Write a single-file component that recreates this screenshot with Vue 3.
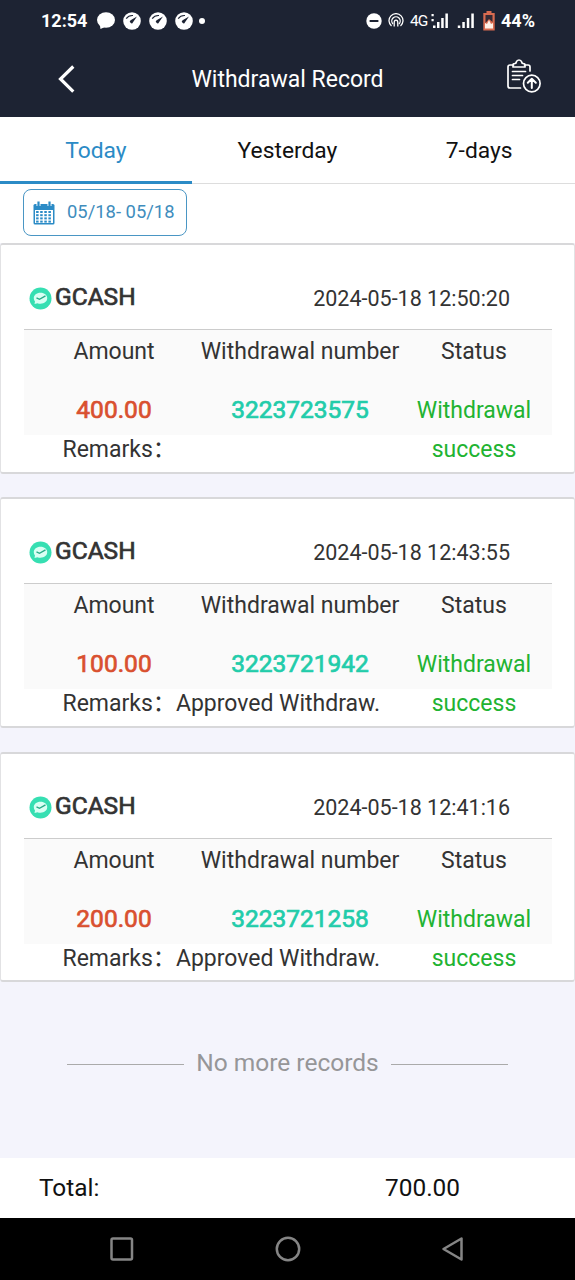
<script setup>
const tabs = ['Today', 'Yesterday', '7-days']
const records = [
  { time: '2024-05-18 12:50:20', amount: '400.00', number: '3223723575', remark: '' },
  { time: '2024-05-18 12:43:55', amount: '100.00', number: '3223721942', remark: 'Approved Withdraw.' },
  { time: '2024-05-18 12:41:16', amount: '200.00', number: '3223721258', remark: 'Approved Withdraw.' },
]
const gridCells = [0, 1, 2, 3].flatMap((r) => [0, 1, 2, 3].map((c) => ({ x: 3.6 + c * 4.1, y: 10 + r * 3.2 })))
</script>

<template>
  <div class="screen">
    <header class="top">
      <div class="statusbar">
        <span class="clock">12:54</span>
        <svg class="chat" width="20" height="18" viewBox="0 0 20 18"><ellipse cx="10" cy="8" rx="9" ry="7.7" fill="#fff" /><path d="M3.500 11L4.500 17L11 14Z" fill="#fff" /></svg>
        <svg v-for="n in 3" :key="n" class="gauge" width="18" height="18" viewBox="0 0 18 18">
          <circle cx="9" cy="9" r="8.8" fill="#fff" />
          <path d="M3.2 6.6Q5.600 3.200 10 3.500" fill="none" stroke="#1d2333" stroke-width="1.200" />
          <path d="M14 4.600L10 10.200A1.600 1.600 0 1 1 7.600 8.300Z" fill="#1d2333" />
        </svg>
        <i class="dot"></i>
        <span class="spacer"></span>
        <svg width="16" height="16" viewBox="0 0 16 16"><circle cx="8" cy="8" r="7.700" fill="#fff" /><path d="M3.600 8H12.400" stroke="#1d2333" stroke-width="2" /></svg>
        <svg class="cast" width="16" height="15" viewBox="0 0 16 15" fill="none" stroke="#fff" stroke-width="1.300">
          <path d="M3.500 13A7 7 0 1 1 12.500 13" /><path d="M5 11A4.200 4.200 0 1 1 11 11" /><path d="M6.200 13.500V9.500Q6.200 7.200 8 7.200T9.800 9.500V13.500" />
        </svg>
        <span class="net">4G</span>
        <svg class="sig" width="18" height="16" viewBox="0 0 18 16" fill="#fff"><path d="M.5 1h2.200v2.200h-2.200zM.5 6h2.200v2.200h-2.200zM2 12.500h2.500v2.500h-2.500zM6 9h2.500v6h-2.500zM10.200 5h2.500v10h-2.500zM14.400 .5h2.500v14.500h-2.500z" /></svg>
        <svg class="sig2" width="18" height="16" viewBox="0 0 18 16" fill="#fff"><path d="M.8 12.500h2.500v2.500h-2.500zM5.300 9h2.500v6h-2.500zM9.800 5h2.500v10h-2.500zM14.300 .5h2.500v14.500h-2.500z" /></svg>
        <svg class="batt" width="12" height="20" viewBox="0 0 12 20"><path d="M3.500 0h5v2h3.200v17.500h-11.400v-17.500h3.200z" fill="#d86b50" /><path d="M2.500 4h7v7l-3.500-3-3.500 4z" fill="#342a35" /><path d="M2 12l2 1 2-4 2 4 2-1v5.500h-8z" fill="#fff0e6" /></svg>
        <span class="pct">44%</span>
      </div>
      <div class="titlebar">
        <svg class="back" width="20" height="32" viewBox="0 0 20 32"><path d="M17.300 3.500L4.500 16L17.300 28.700" fill="none" stroke="#fff" stroke-width="3.200" /></svg>
        <h1>Withdrawal Record</h1>
        <svg class="clip" width="36" height="36" viewBox="0 0 36 36" fill="none" stroke="#fff" stroke-width="1.700" stroke-linecap="round" stroke-linejoin="round">
          <path d="M7.500 6H4Q2 6 2 8V27Q2 29 4 29H14.500" /><path d="M18.500 6H22Q24 6 24 8V12" />
          <path d="M7 8V6Q7 4.500 9 4.500Q10 4.500 10.300 3Q11 1 13 1Q15 1 15.700 3Q16 4.500 17 4.500Q19 4.500 19 6V8Z" />
          <path d="M6.500 12.500H19.500M6.500 16.500H16.500M6.500 20.500H13.500" />
          <circle cx="25.800" cy="24.500" r="8.300" /><path d="M25.800 29V20M21.800 23.700L25.800 19.800L29.800 23.700" stroke-width="2" />
        </svg>
      </div>
    </header>

    <nav class="tabs">
      <span v-for="(t, i) in tabs" :key="t" class="tab" :class="{ active: i === 0 }">{{ t }}</span>
    </nav>

    <div class="filter">
      <div class="range">
        <svg width="22" height="24" viewBox="0 0 22 24">
          <path d="M2 3H20Q21.500 3 21.500 4.500V22Q21.500 23.500 20 23.500H2Q.5 23.500 .5 22V4.500Q.5 3 2 3Z" fill="#2b8bc6" />
          <path d="M2 9H20V22H2Z" fill="#fff" />
          <rect v-for="(c, i) in gridCells" :key="i" :x="c.x - .5" :y="c.y" width="2.500" height="2" fill="#2b8bc6" />
          <path d="M5.500 1V5M16.500 1V5" stroke="#fff" stroke-width="4" /><path d="M5.500 .5V5M16.500 .5V5" stroke="#2b8bc6" stroke-width="2.200" />
        </svg>
        <span>05/18- 05/18</span>
      </div>
    </div>

    <main class="list">
      <article v-for="r in records" :key="r.number" class="card">
        <div class="head">
          <svg width="23" height="23" viewBox="0 0 23 23">
            <circle cx="11.500" cy="11.500" r="11" fill="#36dfb2" />
            <path d="M11.500 5.800C7.500 5.800 4.800 8.200 4.800 11.300Q4.800 13.200 6 14.500L5.500 17L8.500 16.200Q9.800 16.700 11.500 16.700C15.500 16.700 18.200 14.400 18.200 11.300S15.500 5.800 11.500 5.800Z" fill="#d9fff4" />
            <path d="M7.500 10.800L10.500 12.300L16.500 8.800" fill="none" stroke="#27ab87" stroke-width="1.400" />
          </svg>
          <strong>GCASH</strong>
          <time>{{ r.time }}</time>
        </div>
        <div class="table">
          <span class="th">Amount</span><span class="th">Withdrawal number</span><span class="th">Status</span>
          <span class="td amount">{{ r.amount }}</span>
          <span class="td number">{{ r.number }}</span>
          <span class="td status">Withdrawal<br />success</span>
        </div>
        <div class="remarks">Remarks：<span>{{ r.remark }}</span></div>
      </article>
      <div class="end"><i></i><span>No more records</span><i></i></div>
    </main>

    <footer class="total"><span>Total:</span><span>700.00</span></footer>

    <div class="navbar">
      <svg width="24" height="24" viewBox="0 0 24 24"><rect x="1.500" y="1.500" width="20.500" height="21" rx="1.500" /></svg>
      <svg width="26" height="26" viewBox="0 0 26 26"><circle cx="13" cy="13" r="11.200" /></svg>
      <svg width="24" height="26" viewBox="0 0 24 26"><path d="M20.500 2.500V23.500L2.500 13Z" stroke-linejoin="round" /></svg>
    </div>
  </div>
</template>

<style>
body { margin: 0; background: #f4f4fc; }
</style>

<style scoped>
.screen { width: 575px; height: 1280px; display: flex; flex-direction: column; overflow: hidden; background: #f4f4fc; font-family: Roboto, "Noto Sans CJK SC", sans-serif; font-size: 22px; color: #333; }
svg { display: block; flex: none; }
.top { height: 117px; background: #1d2333; color: #fff; flex: none; }
.statusbar { height: 41px; display: flex; align-items: center; padding: 0 41px; box-sizing: border-box; }
.clock { font-size: 18px; font-weight: 700; width: 55px; line-height: 40px; }
.gauge { margin-left: 8px; }
.chat { margin-right: -1px; }
.dot { width: 6px; height: 6px; border-radius: 50%; background: #fff; margin-left: 6px; }
.spacer { flex: 1; }
.cast { margin-left: 6px; }
.net { font-size: 15.500px; margin-left: 6px; width: 17px; letter-spacing: -1px; white-space: nowrap; }
.sig { margin-left: 4px; }
.sig2 { margin-left: 8px; }
.batt { margin-left: 8px; }
.pct { font-size: 18px; font-weight: 700; margin-left: 6px; width: 33px; white-space: nowrap; }
.titlebar { height: 76px; display: grid; grid-template-columns: 88px 1fr 88px; align-items: center; }
.back { margin-left: 56px; }
h1 { margin: 0; text-align: center; font-size: 23px; font-weight: 400; line-height: 75px; }
.clip { margin: -4px 0 0 19px; }
.tabs { height: 67px; flex: none; display: grid; grid-template-columns: repeat(3, 1fr); background: #fff; color: #111; box-sizing: border-box; }
.tab { text-align: center; line-height: 67px; font-size: 22.800px; border-bottom: 1px solid #ddd; box-sizing: border-box; height: 67px; }
.tab.active { color: #2b8bc6; border-bottom: 3px solid #2b8bc6; }
.filter { height: 59px; flex: none; padding: 5px 23px 0; box-sizing: border-box; background: #fff; }
.range { width: 164px; height: 47px; box-sizing: border-box; border: 1px solid #4a96c4; border-radius: 8px; display: flex; align-items: center; padding-left: 9px; gap: 12px; font-size: 18.400px; color: #3f8dbd; white-space: nowrap; }
.range span { margin-top: -2px; }
.list { flex: 1; min-height: 0; }
.card { height: 230.500px; margin-bottom: 23.900px; box-sizing: border-box; background: #fff; border: 1px solid #e2e2e4; border-top: 2px solid #d8d8da; border-bottom: 2px solid #d8d8da; border-radius: 3px; padding: 0 22px 0 23px; }
.head { height: 85px; box-sizing: border-box; border-bottom: 1px solid #ccc; display: flex; align-items: flex-start; padding: 38px 42px 0 5px; line-height: 28px; }
.head svg { margin: 4px 3px 0 0; }
.head strong { font-size: 24.500px; font-weight: 400; -webkit-text-stroke: .7px #333; }
.head time { margin-left: auto; font-size: 21.500px; line-height: 31px; }
.table { height: 105px; background: #fafafa; display: grid; grid-template-columns: 180px 192px 156px; grid-template-rows: 42px 63px; }
.th, .td { display: flex; justify-content: center; white-space: nowrap; line-height: 43px; font-size: 23px; }
.td { padding-top: 19px; line-height: 39px; height: 39px; text-align: center; }
.amount { color: #d9502f; font-size: 24.500px; line-height: 38px; -webkit-text-stroke: .7px #d9502f; }
.number { color: #22ccaa; font-size: 24.500px; line-height: 38px; -webkit-text-stroke: .7px #22ccaa; }
.status { color: #21b331; }
.remarks { padding-left: 38.500px; line-height: 29px; font-size: 23px; white-space: nowrap; }
.end { display: flex; align-items: center; justify-content: center; gap: 12px; margin-top: 65px; color: #969698; font-size: 24.500px; line-height: 32px; }
.end i { width: 117px; height: 1px; background: #aaa; margin-top: 3px; }
.total { height: 60px; flex: none; background: #fff; color: #111; display: flex; justify-content: space-between; padding: 0 115px 0 39px; line-height: 60px; font-size: 24.400px; }
.navbar { height: 62px; flex: none; background: #000; display: flex; align-items: center; justify-content: space-between; padding: 0 110px; box-sizing: border-box; }
.navbar svg { fill: none; stroke: #858585; stroke-width: 2.500; }
</style>
